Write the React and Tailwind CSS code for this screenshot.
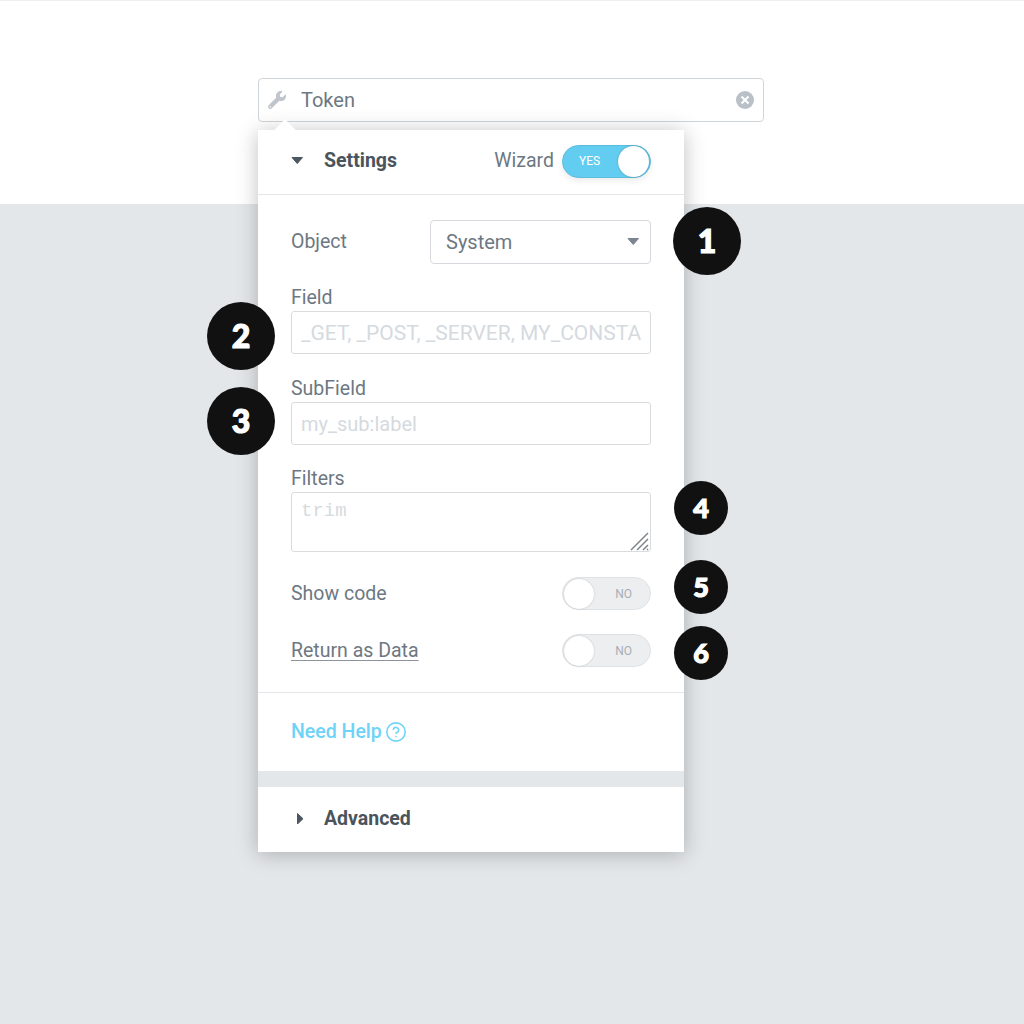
import React from "react";
import { FaWrench } from "react-icons/fa";
import { CircleHelp } from "lucide-react";

function Caret({ dir = "down", className = "" }) {
  const d = dir === "down" ? "M1 1.5h10.5L6.25 7.5z" : "M1.5 0.5v10.5L7 5.75z";
  return (
    <svg width="13" height="11" viewBox="0 0 13 11" className={className} fill="currentColor" stroke="currentColor" strokeWidth="1" strokeLinejoin="round">
      <path d={d} />
    </svg>
  );
}

function Badge({ n, size = "lg", className = "" }) {
  const dims = size === "lg" ? "w-[68px] h-[68px] text-[32px]" : "w-[54px] h-[54px] text-[27px]";
  return (
    <div className={`absolute ${dims} rounded-full bg-[#111111] text-white flex items-center justify-center font-black font-['Lato',sans-serif] [-webkit-text-stroke:1.2px_white] ${className}`}>
      {n}
    </div>
  );
}

function Toggle({ on }) {
  if (on) {
    return (
      <div className="w-[89px] h-[33px] rounded-full bg-[#62cdf0] border border-[#5bbcdc] flex items-center justify-between pl-[16px] pr-px shadow-[0_3px_6px_rgba(0,0,0,0.08)]">
        <span className="text-[12px] text-white">YES</span>
        <span className="w-[31px] h-[31px] rounded-full bg-white shadow-[0_0_2px_rgba(0,0,0,0.3)]" />
      </div>
    );
  }
  return (
    <div className="w-[89px] h-[33px] rounded-full bg-[#eceef0] border border-[#dfe2e5] flex items-center justify-between pl-px pr-[18px]">
      <span className="w-[30px] h-[30px] rounded-full bg-white shadow-[0_0_2px_rgba(0,0,0,0.2)]" />
      <span className="text-[12px] text-[#a9afb5]">NO</span>
    </div>
  );
}

function Field({ label, placeholder, inputSize, className = "" }) {
  return (
    <div className={className}>
      <div className="text-[19.5px] leading-[22px] text-[#6d7882]">{label}</div>
      <input
        readOnly
        placeholder={placeholder}
        className={`mt-[2px] w-full h-[43px] px-[9px] border border-[#d9dcdf] rounded-[3px] bg-white outline-none placeholder:text-[#d5dade] ${inputSize}`}
      />
    </div>
  );
}

export default function App() {
  return (
    <div className="relative min-h-screen pt-[78px] pl-[258px] pb-[172px] bg-[linear-gradient(#eeeeee_1px,#ffffff_1px,#ffffff_204px,#e4e7ea_204px)] font-['Roboto',sans-serif]">
      <div className="w-[506px] h-[44px] border border-[#d0d5da] rounded-[4px] bg-white flex items-center pl-[9px] pr-[9px] text-[#6d7882]">
        <FaWrench className="w-[18px] h-[18px] text-[#bfc5cb]" />
        <span className="ml-[15px] text-[20px] flex-1">Token</span>
        <span className="w-[18px] h-[18px] rounded-full bg-[#b9c0c7] text-white flex items-center justify-center">
          <svg width="10" height="10" viewBox="0 0 10 10" stroke="currentColor" strokeWidth="2"><path d="M1.5 1.5l7 7M8.500 1.500l-7 7" /></svg>
        </span>
      </div>

      <div className="relative mt-[8px] w-[426px] bg-white shadow-[0_2px_20px_rgba(0,0,0,0.25)]">
        <div className="absolute -top-[7px] left-[18px] w-[18px] h-[18px] rotate-45 bg-white" />

        <div className="relative h-[65px] border-b border-[#e4e7ea] pl-[33px] pr-[33px] pb-[2px] flex items-center">
          <Caret className="text-[#4d5761]" />
          <span className="ml-[20px] text-[19.5px] font-bold text-[#4b545c] flex-1">Settings</span>
          <span className="text-[19.5px] text-[#6d7882] mr-[8px]">Wizard</span>
          <Toggle on />
        </div>

        <div className="px-[33px] pt-[25px]">
          <div className="flex items-center justify-between">
            <span className="text-[19.5px] text-[#6d7882]">Object</span>
            <div className="w-[221px] h-[44px] border border-[#d5d9dd] rounded-[4px] flex items-center justify-between pl-[15px] pr-[10px] text-[20px] text-[#6d7882]">
              System
              <Caret className="text-[#7a8590]" />
            </div>
          </div>

          <Field label="Field" placeholder="_GET, _POST, _SERVER, MY_CONSTANT" inputSize="text-[21px]" className="mt-[23px]" />
          <Field label="SubField" placeholder="my_sub:label" inputSize="text-[20px]" className="mt-[24px]" />

          <div className="mt-[23px]">
            <div className="text-[19.5px] leading-[22px] text-[#6d7882]">Filters</div>
            <div className="relative mt-[2px]">
              <textarea
                readOnly
                placeholder="trim"
                className="block w-full h-[60px] px-[9px] pt-[6px] border border-[#d9dcdf] rounded-[3px] resize-none outline-none text-[19px] leading-[24px] font-['Liberation_Mono',monospace] placeholder:text-[#d5dade]"
              />
              <svg width="20" height="20" viewBox="0 0 20 20" className="absolute right-[1px] bottom-[1px] text-[#7f858a]" stroke="currentColor" strokeWidth="1.5">
                <path d="M1 19L18 2M7 19L18 8M13 19l5-5M17 19l1-1" />
              </svg>
            </div>
          </div>

          <div className="mt-[25px] flex items-center justify-between">
            <span className="text-[19.5px] text-[#6d7882]">Show code</span>
            <Toggle />
          </div>
          <div className="mt-[24px] flex items-center justify-between">
            <span className="text-[19.5px] text-[#6d7882] underline decoration-[#8a949c] underline-offset-[3px] decoration-1">Return as Data</span>
            <Toggle />
          </div>
        </div>

        <div className="mt-[25px] h-[79px] border-t border-[#e4e7ea] pl-[33px] flex items-center text-[#6dd3f7]">
          <span className="text-[19.5px] font-medium">Need Help</span>
          <CircleHelp className="ml-[3px] w-[22px] h-[22px]" strokeWidth={1.75} />
        </div>

        <div className="h-[16px] bg-[#e4e7ea]" />

        <div className="h-[65px] pl-[38px] pb-[2px] flex items-center">
          <Caret dir="right" className="text-[#4d5761]" />
          <span className="ml-[15px] text-[19.5px] font-bold text-[#4b545c]">Advanced</span>
        </div>
      </div>

      <Badge n="1" className="left-[673px] top-[207px]" />
      <Badge n="2" className="left-[207px] top-[302px]" />
      <Badge n="3" className="left-[207px] top-[387px]" />
      <Badge n="4" size="sm" className="left-[674px] top-[481px]" />
      <Badge n="5" size="sm" className="left-[674px] top-[560px]" />
      <Badge n="6" size="sm" className="left-[674px] top-[626px]" />
    </div>
  );
}
